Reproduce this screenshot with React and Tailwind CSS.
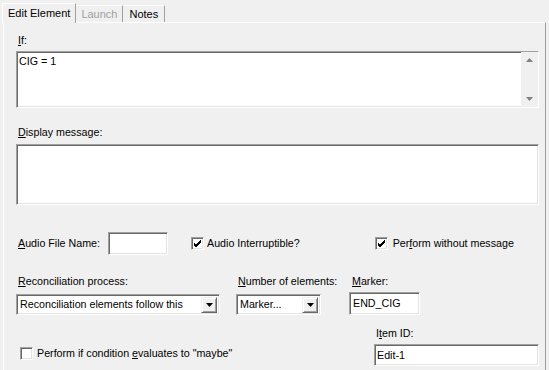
import React from "react";

const sunken =
  "border border-t-[#a0a0a0] border-l-[#a0a0a0] border-b-[#ffffff] border-r-[#ffffff] shadow-[inset_1px_1px_0_#696969,inset_-1px_-1px_0_#e3e3e3] bg-white";

const U = ({ children }) => <span className="underline">{children}</span>;

const Checkbox = ({ checked }) => (
  <div className={`w-[13px] h-[13px] shrink-0 flex items-center justify-center ${sunken}`}>
    {checked && (
      <svg width="9" height="9" viewBox="0 0 9 9">
        <path d="M1 4 L3 6 L8 1 M1 5 L3 7 L8 2 M1 6 L3 8 L8 3" stroke="#000" strokeWidth="1" fill="none" />
      </svg>
    )}
  </div>
);

const Dropdown = ({ value, width }) => (
  <div className={`flex items-center h-[21px] ${width} ${sunken} pl-[3px] pr-[2px]`}>
    <span className="flex-1 truncate">{value}</span>
    <div className="w-[16px] h-[16px] bg-[#f0f0f0] border border-t-[#f0f0f0] border-l-[#f0f0f0] border-b-[#696969] border-r-[#696969] shadow-[inset_1px_1px_0_#ffffff,inset_-1px_-1px_0_#a0a0a0] flex items-center justify-center">
      <svg width="7" height="4" viewBox="0 0 7 4">
        <path d="M0 0 H7 L3.5 4 Z" fill="#000" />
      </svg>
    </div>
  </div>
);

export default function App() {
  return (
    <div
      className="w-[549px] h-[370px] overflow-hidden bg-[#f0f0f0] text-[10.7px] leading-[13px] text-black whitespace-nowrap"
      style={{ fontFamily: '"Liberation Sans", Arial, sans-serif' }}
    >
      {/* tabs */}
      <div className="flex items-end h-[22px] pl-[2px]">
        <div className="h-[20px] px-[5px] pt-[3px] bg-[#f0f0f0] border border-b-0 border-t-white border-l-white border-r-[#a0a0a0] relative z-10 -mb-px text-[11px]">
          Edit Element
        </div>
        <div className="h-[17px] px-[5px] pt-[2px] border border-b-0 border-t-white border-l-0 border-r-[#a0a0a0] text-[#a0a0a0] text-[11px]">
          Launch
        </div>
        <div className="h-[17px] px-[6px] pt-[2px] border border-b-0 border-t-white border-l-0 border-r-[#a0a0a0] text-[11px]">
          Notes
        </div>
      </div>

      {/* panel */}
      <div className="ml-[3px] w-[543px] h-[360px] border border-t-white border-l-white border-r-[#a0a0a0] border-b-0 pl-[12px] pr-[6px]">
        <div className="pt-[11px] pl-[2px]">
          <U>I</U>f:
        </div>
        <div className={`mt-[4px] h-[57px] w-[523px] flex ${sunken}`}>
          <div className="flex-1 pl-[2px] pt-[3px]">CIG = 1</div>
          <div className="w-[17px] bg-[#f0f0f0] flex flex-col items-center justify-between py-[6px]">
            <svg width="7" height="4" viewBox="0 0 7 4">
              <path d="M0 4 H7 L3.5 0 Z" fill="#808080" />
            </svg>
            <svg width="7" height="4" viewBox="0 0 7 4">
              <path d="M0 0 H7 L3.5 4 Z" fill="#808080" />
            </svg>
          </div>
        </div>

        <div className="mt-[18px] pl-[2px]">
          <U>D</U>isplay message:
        </div>
        <div className={`mt-[5px] h-[61px] w-[523px] ${sunken}`}></div>

        {/* audio row */}
        <div className="mt-[27px] flex items-center h-[23px]">
          <div className="pl-[2px] w-[92px]">
            <U>A</U>udio File Name:
          </div>
          <div className={`h-[23px] w-[60px] ${sunken}`}></div>
          <div className="ml-[23px] flex items-center gap-[3px]">
            <Checkbox checked />
            <span>Audio Interruptible?</span>
          </div>
          <div className="ml-[75px] flex items-center gap-[5px]">
            <Checkbox checked />
            <span>
              Per<U>f</U>orm without message
            </span>
          </div>
        </div>

        {/* reconciliation row */}
        <div className="mt-[20px] flex">
          <div className="w-[204px]">
            <div className="pl-[2px]">
              <U>R</U>econciliation process:
            </div>
            <div className="mt-[6px]">
              <Dropdown value="Reconciliation elements follow this" width="w-[204px]" />
            </div>
          </div>
          <div className="ml-[16px] w-[85px]">
            <div className="pl-[2px]">
              <U>N</U>umber of elements:
            </div>
            <div className="mt-[6px]">
              <Dropdown value="Marker..." width="w-[85px]" />
            </div>
          </div>
          <div className="ml-[28px] w-[71px]">
            <div className="pl-[3px]">
              <U>M</U>arker:
            </div>
            <div className={`mt-[4px] h-[23px] w-[71px] pl-[3px] flex items-center ${sunken}`}>END_CIG</div>
          </div>
        </div>

        {/* bottom row */}
        <div className="mt-[12px] flex">
          <div className="pl-[4px] pt-[20px] flex items-start gap-[4px] w-[359px]">
            <Checkbox />
            <span>
              Perform if condition <U>e</U>valuates to "maybe"
            </span>
          </div>
          <div className="w-[165px]">
            <div className="pl-[2px]">
              I<U>t</U>em ID:
            </div>
            <div className={`mt-[4px] h-[22px] w-[165px] pl-[2px] flex items-center ${sunken}`}>Edit-1</div>
          </div>
        </div>
      </div>
    </div>
  );
}
